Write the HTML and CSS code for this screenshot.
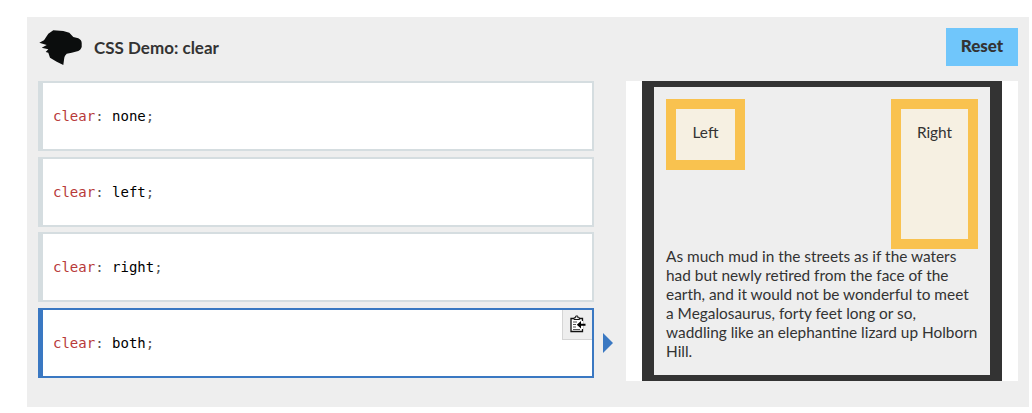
FILE: index.html
```html
<!DOCTYPE html>
<html lang="en">
<head>
<meta charset="utf-8">
<title>CSS Demo: clear</title>
<link rel="stylesheet" href="styles.css">
</head>
<body>
<main class="demo">
  <header class="head">
    <svg class="logo" width="44" height="36" viewBox="0 0 44 36" aria-hidden="true"><path fill="#0b0d0d" d="M1.300 12.700L6 10.300L10.300 3.700L15.300 .3L25.300 1L31.300 2.700L35.300 7L40.300 8.300C42.500 9.500 43.700 11 43.700 13V17C43 19 42 20 40.300 21L33.700 22.700L28.700 23.700C27.500 25 26.800 26 26.300 27.700L25.300 35L18.700 31.700L12 27.700L10.300 22.700L7.700 22L10.300 19.300L3.700 17.700L8.700 15Z"/></svg>
    <h1 class="title">CSS Demo: clear</h1>
    <button class="reset" type="button">Reset</button>
  </header>
  <div class="body">
    <div class="choices">
      <div class="choice"><code><span class="prop">clear</span><span class="punc">:</span> none<span class="punc">;</span></code></div>
      <div class="choice"><code><span class="prop">clear</span><span class="punc">:</span> left<span class="punc">;</span></code></div>
      <div class="choice"><code><span class="prop">clear</span><span class="punc">:</span> right<span class="punc">;</span></code></div>
      <div class="choice selected">
        <code><span class="prop">clear</span><span class="punc">:</span> both<span class="punc">;</span></code>
        <span class="copy"><svg width="16" height="18" viewBox="0 0 16 18" aria-hidden="true"><path fill="#fff" stroke="#111" stroke-width="1.300" d="M1 3.500H12.500V16.500H1Z"/><path fill="#fff" stroke="#111" d="M4 4.500V2.800H5.700V1H7.800V2.800H9.500V4.500Z"/><path stroke="#555" stroke-width="1.200" d="M3 7h5M3 9.500h3M3 12h3M3 14.500h7"/><path fill="#fff" d="M7 6h6v8H7z"/><path fill="#000" d="M15.500 8.800V10.800H11V13.500L6.800 9.800L11 6.100V8.800Z"/></svg></span>
      </div>
      <svg class="arrow" width="10" height="20" viewBox="0 0 10 20" aria-hidden="true"><path fill="#3a78c2" d="M0 0L10 10L0 20Z"/></svg>
    </div>
    <section class="output">
      <div class="example">
        <div class="box left">Left</div>
        <div class="box right">Right</div>
        <p class="para">As much mud in the streets as if the waters had but newly retired from the face of the earth, and it would not be wonderful to meet a Megalosaurus, forty feet long or so, waddling like an elephantine lizard up Holborn Hill.</p>
      </div>
    </section>
  </div>
</main>
</body>
</html>
```
FILE: styles.css
```css
html, body { margin: 0; background: #fff; }
body { height: 413px; overflow: hidden; font-family: Lato, "Open Sans", sans-serif; color: #333; }
.demo { margin: 17px 3px 0 27px; height: 390px; box-sizing: border-box; background: #eee; padding: 11px 11px 0 11px; }
.head { display: flex; align-items: center; height: 38px; margin-bottom: 15px; }
.logo { margin-top: 1px; flex: none; }
.title { margin: 0 0 0 12px; font-size: 17px; font-weight: 700; color: #333; flex: 1; }
.reset { width: 72px; height: 38px; border: 0; padding: 0 0 3px; background: #70c6fb; color: #333; font: 900 17px Lato, sans-serif; }
.body { display: flex; }
.choices { position: relative; width: 556px; margin-right: 32px; display: flex; flex-direction: column; gap: 5.6px; flex: none; }
.choice { position: relative; box-sizing: border-box; height: 70px; background: #fff; border: 2px solid #d5dde0; border-left-width: 5px; display: flex; align-items: center; padding: 0 0 0 10px; }
.choice code { font: 14px/1 "DejaVu Sans Mono", monospace; color: #000; }
.prop { color: #b83a3a; }
.punc { color: #555; }
.selected { border-color: #3a78c2; }
.copy { position: absolute; top: 0; right: 0; width: 30px; height: 30px; box-sizing: border-box; background: #eee; border: solid #d5d5d5; border-width: 0 0 1px 1px; display: flex; align-items: center; justify-content: center; }
.arrow { position: absolute; left: 565px; top: 252px; }
.output { width: 392px; height: 300px; background: #fff; padding: 0 16px; box-sizing: border-box; flex: none; }
.example { height: 300px; box-sizing: border-box; background: #eee; border: solid #333; border-width: 6px 12px; padding: 12px; font-size: 15.400px; line-height: 19px; }
.box { box-sizing: border-box; border: 10px solid #f9c24f; background: #f6f0e2; padding-top: 14px; text-align: center; }
.left { float: left; width: 79px; height: 71px; }
.right { float: right; width: 87px; height: 150px; margin-bottom: -2px; }
.para { clear: both; margin: 0; }
```
